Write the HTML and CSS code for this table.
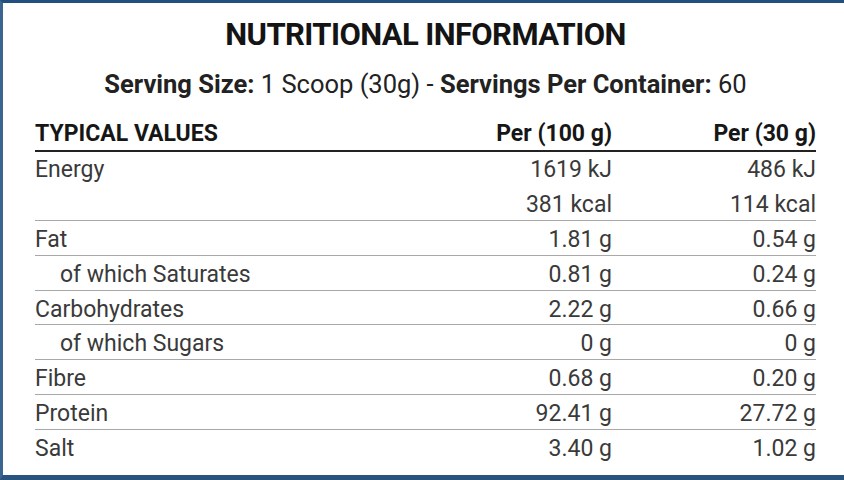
FILE: index.html
```html
<!DOCTYPE html>
<html>
<head>
<meta charset="utf-8">
<link rel="stylesheet" href="styles.css">
</head>
<body>
<div class="frame">
  <h1 class="title">NUTRITIONAL INFORMATION</h1>
  <p class="serving"><b>Serving Size:</b> 1 Scoop (30g) - <b>Servings Per Container:</b> 60</p>
  <div class="table">
    <div class="row head">
      <span class="name">TYPICAL VALUES</span>
      <span class="val">Per (100 g)</span>
      <span class="val">Per (30 g)</span>
    </div>
    <div class="row double">
      <span class="name">Energy</span>
      <span class="val">1619 kJ<br>381 kcal</span>
      <span class="val">486 kJ<br>114 kcal</span>
    </div>
    <div class="row">
      <span class="name">Fat</span>
      <span class="val">1.81 g</span>
      <span class="val">0.54 g</span>
    </div>
    <div class="row">
      <span class="name sub">of which Saturates</span>
      <span class="val">0.81 g</span>
      <span class="val">0.24 g</span>
    </div>
    <div class="row">
      <span class="name">Carbohydrates</span>
      <span class="val">2.22 g</span>
      <span class="val">0.66 g</span>
    </div>
    <div class="row">
      <span class="name sub">of which Sugars</span>
      <span class="val">0 g</span>
      <span class="val">0 g</span>
    </div>
    <div class="row">
      <span class="name">Fibre</span>
      <span class="val">0.68 g</span>
      <span class="val">0.20 g</span>
    </div>
    <div class="row">
      <span class="name">Protein</span>
      <span class="val">92.41 g</span>
      <span class="val">27.72 g</span>
    </div>
    <div class="row last">
      <span class="name">Salt</span>
      <span class="val">3.40 g</span>
      <span class="val">1.02 g</span>
    </div>
  </div>
</div>
</body>
</html>
```

FILE: styles.css
```css
html, body {
  margin: 0;
  padding: 0;
  background: #ffffff;
}
.frame {
  box-sizing: border-box;
  width: 844px;
  height: 480px;
  border-top: 3px solid #234f7e;
  border-left: 3px solid #3a6591;
  border-bottom: 5px solid #2a5480;
  background: #ffffff;
  font-family: Roboto, "Liberation Sans", sans-serif;
  color: #333333;
  padding: 14px 28px 0 32px;
}
.title {
  margin: 0;
  text-align: center;
  font-size: 31px;
  line-height: 36px;
  font-weight: 700;
  color: #141414;
  letter-spacing: -0.6px;
}
.serving {
  margin: 17px 0 0 0;
  text-align: center;
  font-size: 25.5px;
  line-height: 28px;
  color: #222222;
  letter-spacing: 0;
}
.serving b {
  font-weight: 700;
}
.table {
  margin-top: 18px;
  width: 781px;
}
.row {
  display: grid;
  grid-template-columns: 1fr 180px 204px;
  box-sizing: border-box;
  height: 34.7px;
  align-items: start;
  padding-top: 2px;
  border-bottom: 1.5px solid #a8a8a8;
  font-size: 23px;
  line-height: 33px;
  color: #3a3a3a;
}
.row.head {
  height: 36px;
  padding-top: 0;
  line-height: 36px;
  border-bottom: 2px solid #222222;
  font-weight: 700;
  color: #161616;
}
.row.double {
  height: 69.4px;
  line-height: 34.5px;
  padding-top: 1px;
}
.row.last {
  border-bottom: none;
}
.val {
  text-align: right;
}
.name.sub {
  padding-left: 25px;
}
```
